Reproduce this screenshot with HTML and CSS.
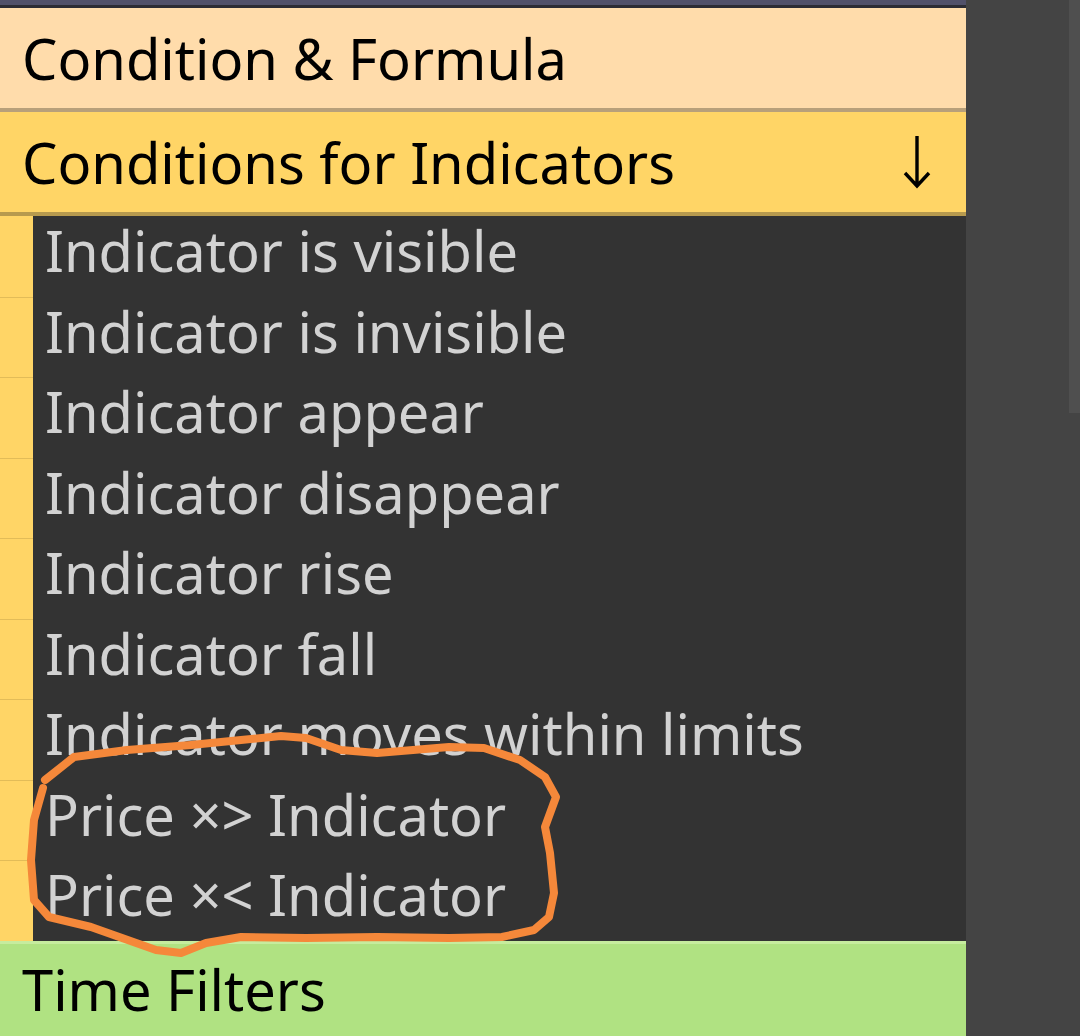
FILE: index.html
```html
<!DOCTYPE html>
<html>
<head lang="en">
    <meta charset="UTF-8">
    <title>Conditions</title>
    <link rel="stylesheet" href="styles.css">
</head>
<body>
<div class="screen">
    <div class="panel">
        <div class="topbar"></div>
        <div class="head head-1">Condition &amp; Formula</div>
        <div class="head head-2">
            <span>Conditions for Indicators</span>
            <svg class="arrow" width="28" height="54" viewBox="0 0 28 54">
                <path d="M14 1 L14 51 M2 38 L14 51 L26 38"/>
            </svg>
        </div>
        <ul class="list">
            <li>Indicator is visible</li>
            <li>Indicator is invisible</li>
            <li>Indicator appear</li>
            <li>Indicator disappear</li>
            <li>Indicator rise</li>
            <li>Indicator fall</li>
            <li>Indicator moves within limits</li>
            <li>Price ×&gt; Indicator</li>
            <li>Price ×&lt; Indicator</li>
        </ul>
        <div class="head head-3">Time Filters</div>
        <svg class="mark" width="580" height="250" viewBox="0 0 580 250">
            <polyline points="45,60 74,37 127,30 191,25 241,20 281,16 306,18 341,30 377,33 413,30 449,27 484,28 520,40 545,57 556,77 545,107 550,133 554,173 549,197 534,210 502,217 449,218 377,217 306,218 241,217 206,223 181,233 156,230 91,207 49,197 34,180 31,140 34,100 43,68"/>
        </svg>
    </div>
    <div class="side">
        <div class="scroll"></div>
    </div>
</div>
</body>
</html>
```

FILE: styles.css
```css
body, ul, li {
    margin: 0;
    padding: 0;
}
body {
    background: #444444;
    font-family: "Noto Sans", "Open Sans", sans-serif;
}
.screen {
    display: flex;
    width: 1080px;
    height: 1036px;
    overflow: hidden;
}
.panel {
    position: relative;
    width: 966px;
    background: #333333;
    display: flex;
    flex-direction: column;
}
.topbar {
    height: 5px;
    background: #51516a;
    border-bottom: 3px solid #2c2c34;
}
.head {
    display: flex;
    align-items: center;
    justify-content: space-between;
    padding: 0 35px 0 22px;
    color: #000000;
    font-size: 56px;
}
.head-1 {
    height: 100px;
    background: #ffdcab;
    border-bottom: 4px solid #b8a07a;
}
.head-2 {
    height: 100px;
    background: #ffd566;
    border-bottom: 4px solid #b79a4e;
}
.arrow {
    fill: none;
    stroke: #000000;
    stroke-width: 3.4;
}
.list {
    list-style-type: none;
    border-left: 33px solid #ffd566;
}
.list li {
    height: 80.5px;
    line-height: 68px;
    padding-left: 12px;
    color: #d2d2d2;
    font-size: 56px;
    white-space: nowrap;
    position: relative;
}
.list li::before {
    content: "";
    position: absolute;
    left: -33px;
    top: 0;
    width: 33px;
    border-top: 1px solid #e2bc58;
}
.list li:first-child::before {
    border-top: 0;
}
.head-3 {
    flex: 1;
    background: #b0e282;
    border-top: 3px solid #c6ec9e;
    align-items: flex-start;
    padding-top: 7px;
}
.side {
    flex: 1;
    display: flex;
    justify-content: flex-end;
}
.scroll {
    width: 11px;
    height: 413px;
    background: #4f4f4f;
}
.mark {
    position: absolute;
    left: 0;
    top: 720px;
    fill: none;
    stroke: #f5883a;
    stroke-width: 8;
    stroke-linecap: round;
    stroke-linejoin: round;
}
```
